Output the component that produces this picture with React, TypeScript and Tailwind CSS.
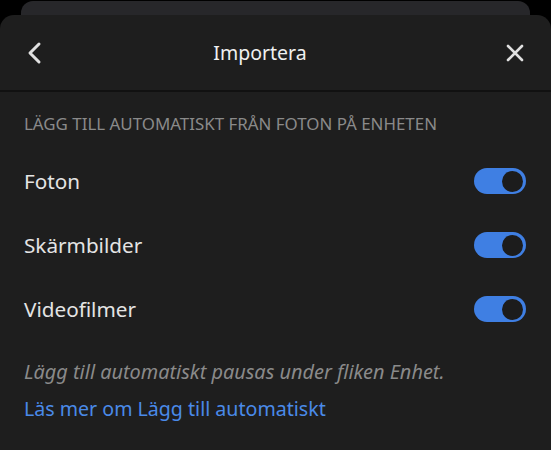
import React from "react";

function Toggle() {
  return (
    <div className="mr-[1px] flex h-[26px] w-[52px] items-center justify-end rounded-full bg-[#3f7fe3] pr-[3px]">
      <div className="h-[21px] w-[21px] rounded-full bg-[#1c1c1c]" />
    </div>
  );
}

function Row({ label }: { label: string }) {
  return (
    <div className="flex h-[64px] items-center justify-between">
      <span className="text-[20.7px] leading-[24px] text-[#e4e4e4]">{label}</span>
      <Toggle />
    </div>
  );
}

export default function App() {
  return (
    <div
      className="flex h-[450px] w-[551px] flex-col overflow-hidden bg-black"
      style={{ fontFamily: '"Noto Sans", "Open Sans", sans-serif' }}
    >
      <div className="mx-[21px] mt-[1px] h-[14px] shrink-0 rounded-t-[12px] bg-[#27272a]" />
      <div className="flex flex-1 flex-col rounded-t-[14px] bg-[#1e1e1e]">
        <div className="flex h-[75px] items-center justify-between px-[26px]">
          <svg width="18" height="24" viewBox="0 0 18 24" className="mt-[1px]">
            <path d="M13 3 L4 12 L13 21" fill="none" stroke="#e0e0e0" strokeWidth="3" strokeLinecap="round" strokeLinejoin="round" />
          </svg>
          <span className="mr-[29px] text-[19.5px] leading-[24px] text-[#f0f0f0]">Importera</span>
          <svg width="20" height="20" viewBox="0 0 20 20" className="mt-[1px]">
            <path d="M3 3 L17 17 M17 3 L3 17" fill="none" stroke="#e0e0e0" strokeWidth="2.6" strokeLinecap="round" />
          </svg>
        </div>
        <div className="h-[2px] bg-[#111111]" />
        <div className="flex flex-col px-[24px]">
          <div className="mt-[22px] text-[16.9px] leading-[20px] text-[#8a8a8a]">
            LÄGG TILL AUTOMATISKT FRÅN FOTON PÅ ENHETEN
          </div>
          <div className="mt-[15px] flex flex-col">
            <Row label="Foton" />
            <Row label="Skärmbilder" />
            <Row label="Videofilmer" />
          </div>
          <div className="mt-[19px] text-[19.9px] italic leading-[24px] text-[#8a8a8a]">
            Lägg till automatiskt pausas under fliken Enhet.
          </div>
          <div className="mt-[13px] text-[19.6px] leading-[24px] text-[#4a8ae8]">
            Läs mer om Lägg till automatiskt
          </div>
        </div>
      </div>
    </div>
  );
}
